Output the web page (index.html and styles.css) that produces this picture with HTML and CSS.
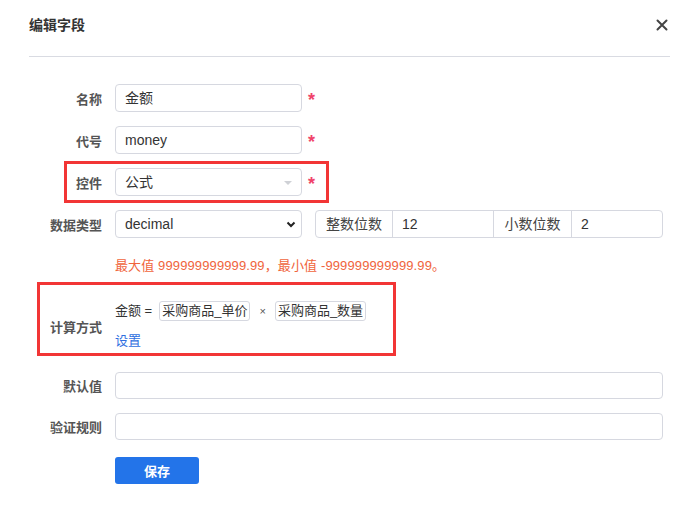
FILE: index.html
```html
<!DOCTYPE html>
<html lang="zh">
<head>
<meta charset="utf-8">
<link rel="stylesheet" href="styles.css">
</head>
<body>
<div class="dialog">
  <div class="header">
    <span class="title">编辑字段</span>
    <svg class="close" width="12" height="12" viewBox="0 0 12 12"><path d="M1.5 1.5 L10.5 10.5 M10.5 1.5 L1.5 10.5" stroke="#444" stroke-width="2" stroke-linecap="round"/></svg>
  </div>
  <div class="form">
    <div class="row">
      <label class="lbl">名称</label>
      <div class="input short">金额</div>
      <span class="req">*</span>
    </div>
    <div class="row">
      <label class="lbl">代号</label>
      <div class="input short">money</div>
      <span class="req">*</span>
    </div>
    <div class="row">
      <label class="lbl">控件</label>
      <div class="input short sel-light">公式<span class="caret"></span></div>
      <span class="req">*</span>
    </div>
    <div class="row">
      <label class="lbl">数据类型</label>
      <div class="input short sel-dark">decimal
        <svg class="chev" width="10" height="7" viewBox="0 0 10 7"><path d="M1.5 1.5 L5 5 L8.5 1.5" fill="none" stroke="#222" stroke-width="2"/></svg>
      </div>
      <div class="group">
        <div class="addon a1">整数位数</div>
        <div class="gin g1">12</div>
        <div class="addon a2">小数位数</div>
        <div class="gin g2">2</div>
      </div>
    </div>
    <div class="hint">最大值 999999999999.99，最小值 -999999999999.99。</div>
    <div class="row calc">
      <label class="lbl">计算方式</label>
      <div class="calc-body">
        <div class="formula">金额 = <span class="chip c1">采购商品_单价</span><span class="times">×</span><span class="chip">采购商品_数量</span></div>
        <a class="link">设置</a>
      </div>
    </div>
    <div class="row r2">
      <label class="lbl">默认值</label>
      <div class="input wide"></div>
    </div>
    <div class="row r2">
      <label class="lbl">验证规则</label>
      <div class="input wide"></div>
    </div>
    <div class="row r2">
      <span class="lbl"></span>
      <button class="btn">保存</button>
    </div>
  </div>
  <div class="mark m1"></div>
  <div class="mark m2"></div>
</div>
</body>
</html>
```
FILE: styles.css
```css
* { box-sizing: border-box; }
body {
  margin: 0;
  background: #fff;
  font-family: "Liberation Sans", "Noto Sans CJK SC", sans-serif;
  color: #333;
}
.dialog {
  position: relative;
  width: 699px;
  height: 511px;
}
.header {
  margin: 0 29px;
  height: 57px;
  padding-top: 15px;
  border-bottom: 1px solid #d9dbe2;
  display: flex;
  justify-content: space-between;
}
.title {
  font-size: 14px;
  font-weight: bold;
  line-height: 20px;
  color: #333;
}
.close {
  margin-top: 4px;
  margin-right: 2px;
}
.form {
  padding-top: 27px;
}
.row {
  display: flex;
  align-items: center;
  margin-bottom: 14px;
}
.lbl {
  width: 102px;
  text-align: right;
  font-size: 13px;
  font-weight: bold;
  color: #555;
  margin-right: 13px;
  flex: none;
}
.input {
  height: 28px;
  border: 1px solid #d6d8e0;
  border-radius: 4px;
  font-size: 14px;
  line-height: 26px;
  padding-left: 9px;
  color: #333;
  position: relative;
  background: #fff;
}
.short { width: 187px; }
.wide { width: 548px; height: 27px; }
.req {
  color: #f0436a;
  font-size: 18px;
  font-weight: bold;
  margin-left: 6px;
  line-height: 20px;
  padding-top: 4px;
}
.caret {
  position: absolute;
  right: 9px;
  top: 12px;
  width: 0; height: 0;
  border-left: 4px solid transparent;
  border-right: 4px solid transparent;
  border-top: 4px solid #cfd1d6;
}
.chev {
  position: absolute;
  right: 5px;
  top: 10px;
}
.group {
  margin-left: 13px;
  display: flex;
  height: 28px;
  border: 1px solid #d6d8e0;
  border-radius: 4px;
  font-size: 14px;
  line-height: 26px;
}
.addon {
  width: 77px;
  text-align: center;
  color: #444;
  border-right: 1px solid #d6d8e0;
}
.a2 { width: 78px; }
.gin {
  padding-left: 9px;
  color: #333;
}
.g1 { width: 101px; border-right: 1px solid #d6d8e0; }
.g2 { width: 90px; }
.hint {
  margin: 18px 0 0 115px;
  font-size: 13px;
  letter-spacing: 0.12px;
  line-height: 20px;
  color: #f0643c;
}
.calc { margin-top: 25px; margin-bottom: 21px; }
.calc-body {
  display: flex;
  flex-direction: column;
  gap: 10px;
}
.formula {
  font-size: 13px;
  line-height: 20px;
  color: #333;
  display: flex;
  align-items: center;
}
.chip {
  border: 1px solid #d6d8e0;
  border-radius: 3px;
  padding: 0 2px;
  height: 20px;
  line-height: 18px;
}
.c1 { margin-left: 7px; }
.times {
  font-size: 11px;
  color: #555;
  margin: 0 9px 0 9px;
}
.link {
  font-size: 13px;
  line-height: 20px;
  color: #2f6fdf;
}
.btn {
  width: 84px;
  height: 27px;
  border: none;
  border-radius: 3px;
  background: #2374e9;
  color: #fff;
  font-family: "Liberation Sans", "Noto Sans CJK SC", sans-serif;
  font-size: 13px;
  font-weight: bold;
  margin-top: 3px;
}
.mark {
  position: absolute;
  border: 3px solid #f23535;
}
.m1 { left: 64px; top: 161px; width: 265px; height: 42px; }
.m2 { left: 37px; top: 282px; width: 359px; height: 74px; }
```
